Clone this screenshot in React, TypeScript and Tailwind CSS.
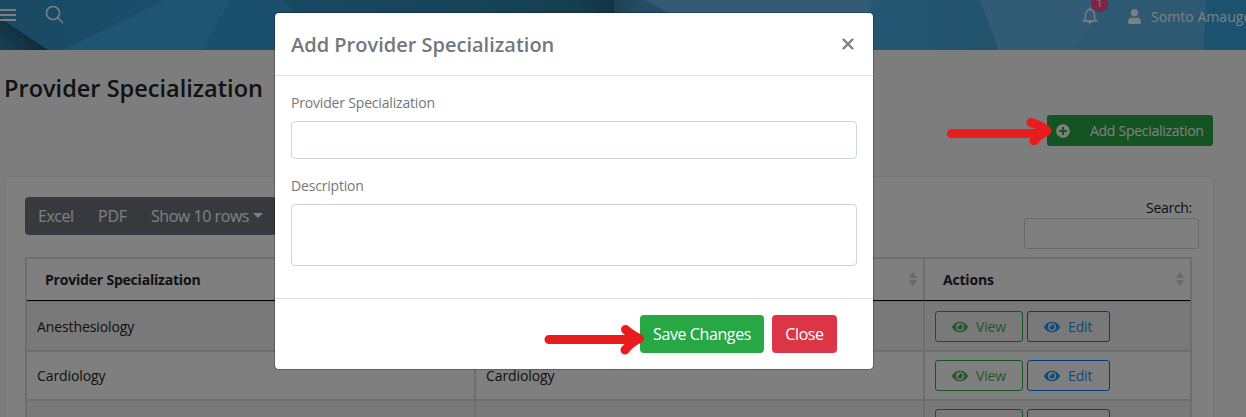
import React from "react";
import { FaEye, FaPlusCircle, FaUser } from "react-icons/fa";

const rows = ["Anesthesiology", "Cardiology", ""];

function HeaderArt() {
  return (
    <svg className="absolute inset-0" width="1246" height="50" viewBox="0 0 1246 50" preserveAspectRatio="none">
      <defs>
        <linearGradient id="base" x1="0" x2="1">
          <stop offset="0" stopColor="#3494c8" />
          <stop offset="1" stopColor="#38a4e0" />
        </linearGradient>
        <linearGradient id="corner" gradientUnits="userSpaceOnUse" x1="8" y1="50" x2="26" y2="30">
          <stop offset="0" stopColor="#2e7aa6" />
          <stop offset="1" stopColor="#235874" />
        </linearGradient>
        <linearGradient id="deep" x1="0" x2="1">
          <stop offset="0" stopColor="#3490c6" />
          <stop offset="0.6" stopColor="#2e86b0" />
          <stop offset="0.9" stopColor="#287e9e" />
          <stop offset="1" stopColor="#246880" />
        </linearGradient>
        <linearGradient id="mid" x1="0" x2="1">
          <stop offset="0" stopColor="#40809f" />
          <stop offset="0.1" stopColor="#4898c8" />
          <stop offset="1" stopColor="#56b0e4" />
        </linearGradient>
        <linearGradient id="right" x1="0" x2="1">
          <stop offset="0" stopColor="#4aaee8" />
          <stop offset="1" stopColor="#44a4d8" />
        </linearGradient>
      </defs>
      <rect width="286" height="50" fill="url(#base)" />
      <polygon points="0,18 48,50 0,50" fill="url(#corner)" />
      <polygon points="62,50 165,0 230,0 203,50" fill="#3caae6" />
      <polygon points="230,0 286,0 320,50 203,50" fill="#36a0da" />
      <polygon points="284,0 614,0 614,50 320,50" fill="url(#deep)" />
      <rect x="614" width="260" height="50" fill="url(#mid)" />
      <polygon points="646,0 873,0 866,20 680,20" fill="#64b8ea" />
      <polygon points="873,0 982,0 999,50 855,50" fill="url(#right)" />
      <polygon points="980,0 1206,0 1203,50 999,50" fill="#64b8ec" />
      <polygon points="1107,0 1206,0 1203,50 1074,50" fill="#5cb2e6" />
      <polygon points="1206,0 1246,0 1246,50 1203,50" fill="#36a4de" />
    </svg>
  );
}

function Header() {
  return (
    <header className="relative h-[50px] overflow-hidden text-white">
      <HeaderArt />
      <div className="relative flex h-full items-start">
        <svg className="mt-[8px] shrink-0" width="16" height="14" stroke="currentColor" strokeWidth="2">
          <path d="M0 2h16M0 7h16M0 12h16" />
        </svg>
        <svg className="mt-[5px] ml-[29px] shrink-0" width="20" height="20" fill="none" stroke="currentColor" strokeWidth="1.5">
          <circle cx="8" cy="8" r="6.500" />
          <path d="M12.500 12.500L18 18" />
        </svg>
        <svg className="mt-[6px] ml-[1016px] shrink-0" width="18" height="18" fill="none" stroke="currentColor" strokeWidth="1.400">
          <path d="M1.500 15h15M3.500 15c1-1 1-3 1-6c0-3 2-5.500 4.500-5.500S13.500 6 13.500 9c0 3 0 5 1 6M9 1.500v2" />
          <path d="M7.500 15.700h3l-1.500 1.200z" fill="currentColor" />
        </svg>
        <FaUser className="mt-[9px] ml-[29px] h-[15px] w-[13px] shrink-0" />
        <span className="mt-[6px] ml-[10px] text-[14px] leading-[22px] tracking-[0.050px] whitespace-nowrap">Somto Amaugo</span>
      </div>
      <span className="absolute top-[-5px] left-[1091px] flex h-[17px] w-[17px] items-center justify-center rounded-full bg-[#fc4888] font-[Roboto] text-[10px]">1</span>
    </header>
  );
}

function SortIcon() {
  return (
    <svg className="-mt-[2px]" width="8" height="16" fill="#d4d4d4">
      <path d="M0 7L4 0.500L8 7zM0 9L4 15.500L8 9z" />
    </svg>
  );
}

function RowButton({ label, className }: { label: string; className: string }) {
  return (
    <button className={"flex h-[31px] items-center rounded-[3px] border text-[14px] " + className}>
      <FaEye className="ml-4 h-[16px] w-[16px]" />
      <span className="ml-[8px] tracking-[-0.150px]">{label}</span>
    </button>
  );
}

function Table() {
  return (
    <div className="mt-[22px] w-[1167px] border-2 border-[#dcdcdc] text-[14px] text-[#212529]">
      <div className="grid h-[42px] grid-cols-[449px_449px_265px] border-b border-black font-bold">
        {["Provider Specialization", "Description", "Actions"].map((h, i) => (
          <div key={h} className={"flex items-center justify-between pr-[6px] pl-[18px] " + (i < 2 ? "border-r-2 border-[#dcdcdc]" : "")}>
            <span className="tracking-[-0.200px]">{h}</span>
            <SortIcon />
          </div>
        ))}
      </div>
      {rows.map((r, i) => (
        <div
          key={i}
          className={"grid h-[49px] grid-cols-[449px_449px_265px] border-[#dcdcdc] " + (i === 0 ? "border-t " : "border-t-2 ") + (i % 2 === 0 ? "bg-[#f2f2f2]" : "")}
        >
          <div className="flex items-center border-r-2 border-[#dcdcdc] pl-[10px] tracking-[-0.100px]">{r}</div>
          <div className="flex items-center border-r-2 border-[#dcdcdc] pl-[10px] tracking-[-0.100px]">{r}</div>
          <div className={"flex items-center gap-1 pl-[10px] " + (i === 0 ? "pt-px" : "")}>
            <RowButton label={r && "View"} className="w-[88px] border-[#28a745] text-[#4caf50]" />
            <RowButton label={r && "Edit"} className="w-[83px] border-[#007bff] text-[#2196f3]" />
          </div>
        </div>
      ))}
    </div>
  );
}

function Modal() {
  return (
    <div className="absolute inset-0 flex items-start justify-center bg-black/50 pt-[13px] pr-[98px]">
      <div className="flex h-[356px] w-[598px] flex-col rounded-[4px] bg-white text-[#74787c] shadow-[0_0_0_1px_rgba(0,0,0,0.25)]">
        <div className="flex h-[63px] items-center justify-between border-b border-[#dee2e6] pr-[19px] pl-[16px]">
          <h5 className="pt-[2px] text-[20px] font-semibold">Add Provider Specialization</h5>
          <svg width="12" height="12" stroke="#808080" strokeWidth="2.300" strokeLinecap="round">
            <path d="M1.500 1.500L10.500 10.500M10.500 1.500L1.500 10.500" />
          </svg>
        </div>
        <div className="flex flex-col px-4 text-[14px] tracking-[-0.180px]">
          <label className="mt-[16px] leading-[21px]">Provider Specialization</label>
          <input className="mt-[8px] h-[38px] rounded-[4px] border border-[#ced4da]" />
          <label className="mt-[16px] leading-[21px]">Description</label>
          <textarea className="mt-[8px] h-[62px] resize-none rounded-[4px] border border-[#ced4da]" />
        </div>
        <div className="mt-[32px] flex gap-2 border-t border-[#dee2e6] pt-[16px] pl-[365px] text-[16px] tracking-[-0.400px] text-white">
          <button className="h-[38px] w-[124px] rounded-[4px] bg-[#28a745] whitespace-nowrap">Save Changes</button>
          <button className="h-[38px] w-[65px] rounded-[4px] bg-[#dc3545] whitespace-nowrap">Close</button>
        </div>
      </div>
    </div>
  );
}

function Arrow({ className, d }: { className: string; d: string }) {
  return (
    <svg className={"absolute " + className} width="110" height="34" fill="none" stroke="#e81c1c" strokeWidth="9" strokeLinecap="round" strokeLinejoin="round">
      <path d={d} />
    </svg>
  );
}

export default function App() {
  return (
    <div className="relative h-[417px] w-[1246px] overflow-hidden bg-[#fafafa] font-['Open_Sans',sans-serif]">
      <Header />
      <div className="pl-[5px]">
        <h3 className="-ml-px h-[65px] pt-[21px] text-[23.500px] leading-[34px] font-semibold tracking-[0.020px] text-[#212529]">Provider Specialization</h3>
        <button className="ml-[1042px] flex h-[31px] w-[166px] items-center rounded-[3px] bg-[#28a745] text-[14px] whitespace-nowrap text-white">
          <FaPlusCircle className="ml-[9px] h-[14px] w-[14px]" />
          <span className="ml-[20px] tracking-[-0.280px]">Add Specialization</span>
        </button>
        <div className="mt-[31px] h-[300px] w-[1208px] rounded-[4px] bg-white px-5 pt-5 shadow-[0_0_2px_rgba(0,0,0,0.2)]">
          <div className="flex h-[38px] justify-between">
            <div className="flex h-[38px] w-[251px] items-center rounded-[4px] bg-[#6c757d] text-[16px] tracking-[-0.450px] whitespace-nowrap text-white">
              <span className="ml-[13px] w-[60px]">Excel</span>
              <span className="w-[53px] tracking-[-0.200px]">PDF</span>
              <span>Show 10 rows</span>
              <svg className="ml-[4px]" width="10" height="6" fill="currentColor"><path d="M0 0H10L5 5z" /></svg>
            </div>
            <div className="mr-[-6px] flex flex-col items-end text-[14px] text-[#212529]">
              <span className="mr-[7px] h-[21px] leading-[22px] tracking-[-0.300px]">Search:</span>
              <input className="h-[31px] w-[175px] shrink-0 rounded-[3px] border border-[#ced4da]" />
            </div>
          </div>
          <Table />
        </div>
      </div>
      <Modal />
      <Arrow className="top-[117px] left-[945px]" d="M6.500 16.500H98M86 5.500C92 7.500 98 9 102 13.500C98 17 92 19 89 24" />
      <Arrow className="top-[323px] left-[541px]" d="M8 16.500H96M84.500 6.500C88 10 93 13 98.500 15.500C93 18 88 22 84 27" />
    </div>
  );
}
